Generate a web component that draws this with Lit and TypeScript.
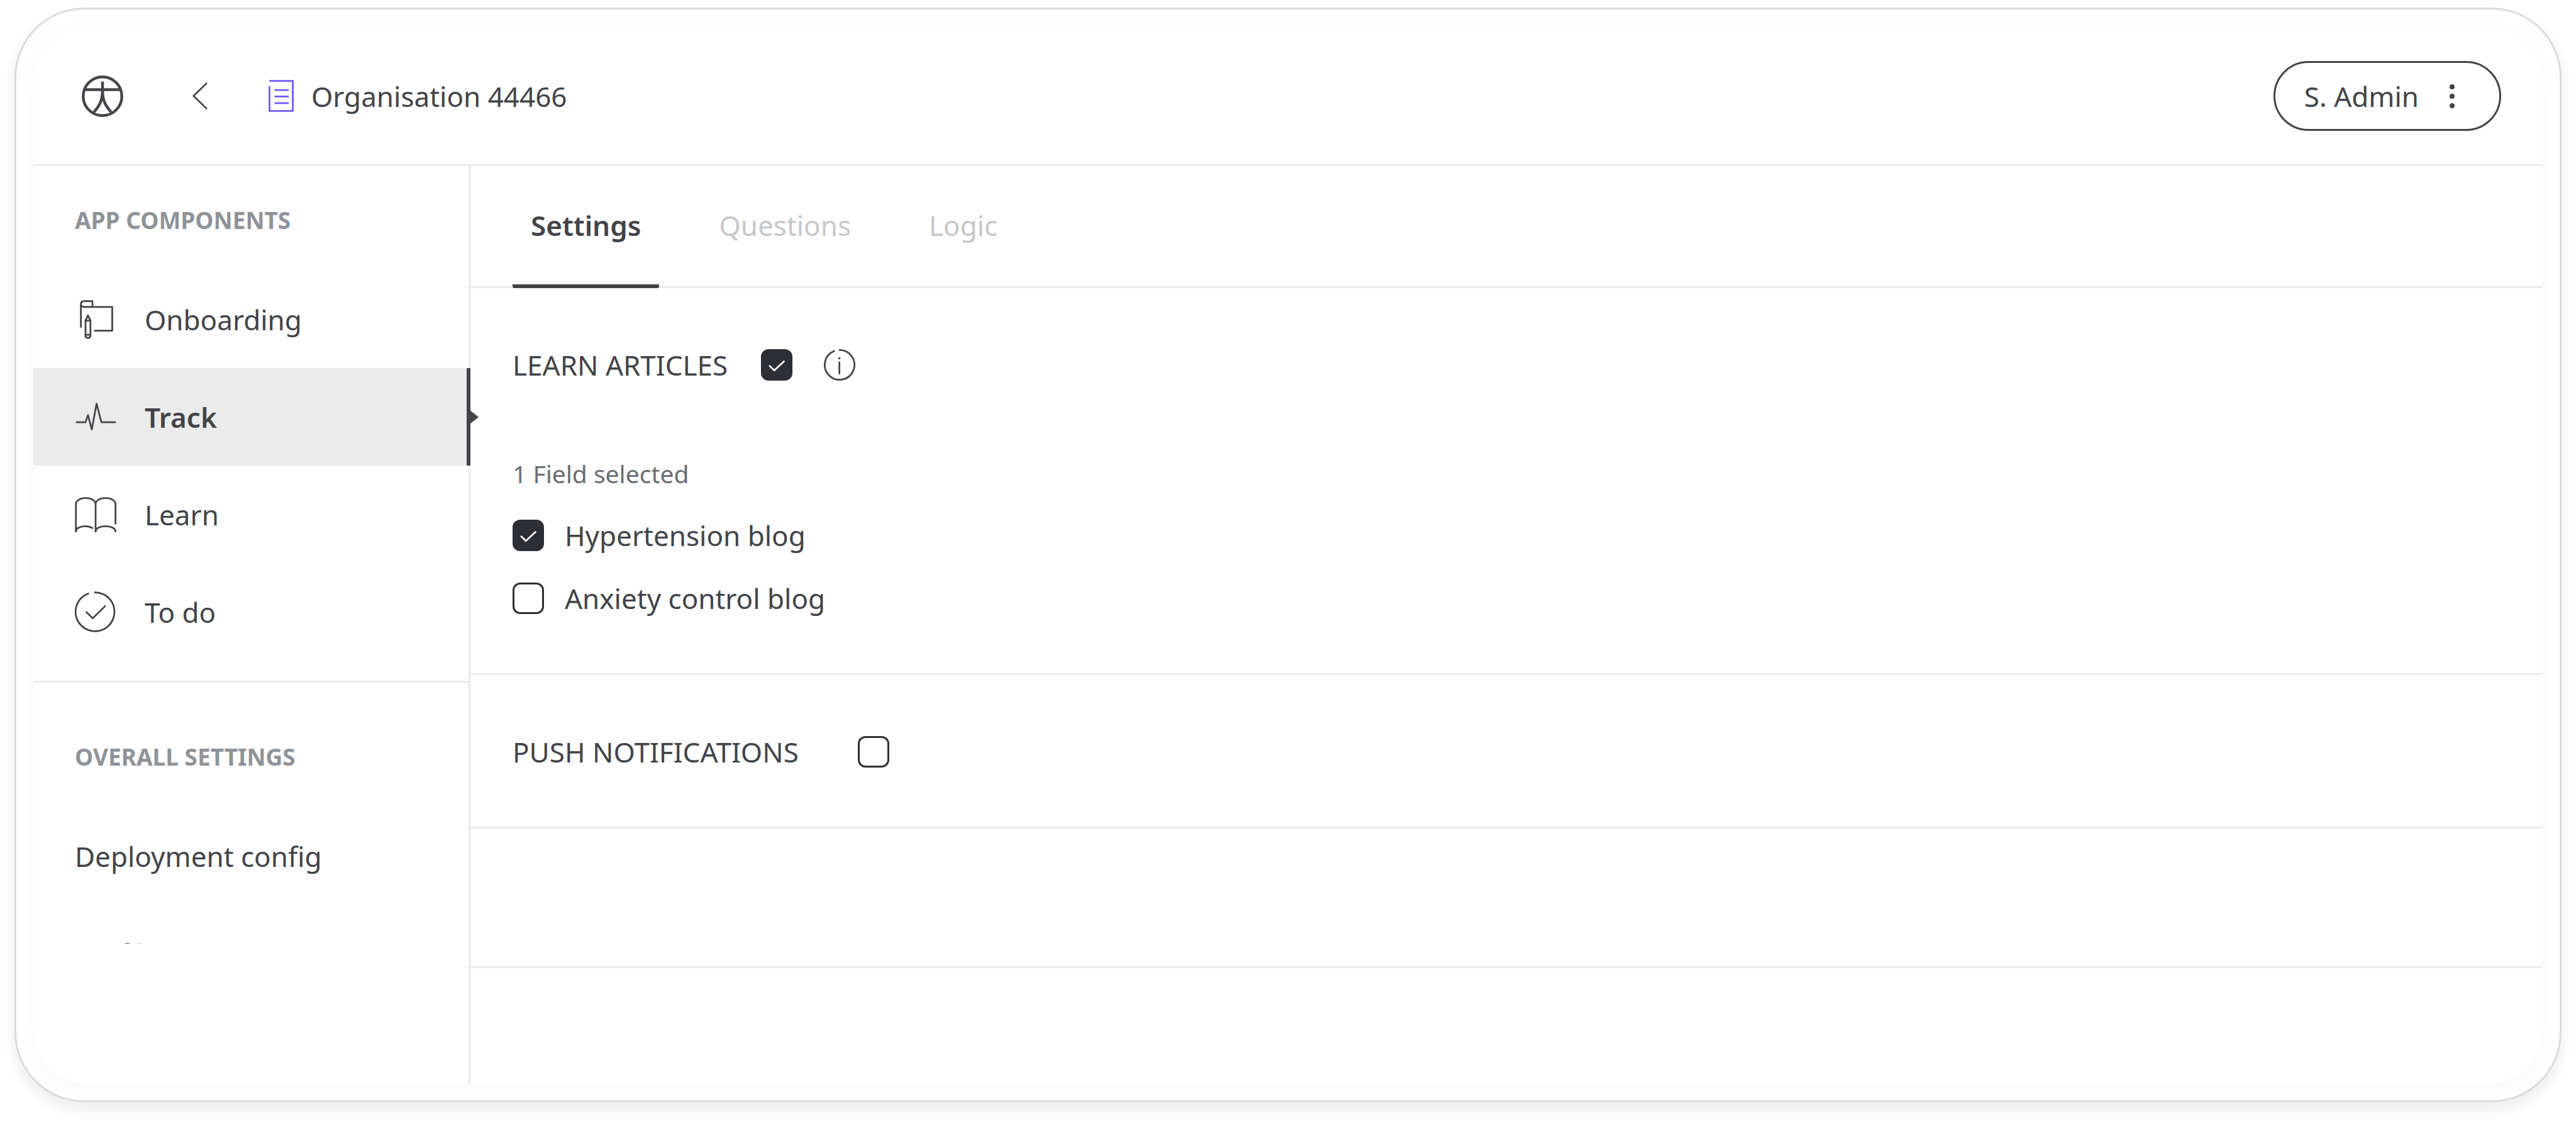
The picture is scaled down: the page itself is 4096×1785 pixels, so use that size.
import { LitElement, html, css, svg, nothing } from "lit";
import { customElement, property, state } from "lit/decorators.js";
import { classMap } from "lit/directives/class-map.js";

const icons = {
  onboarding: svg`
    <path d="M40.7 18.7V5.2H22.5C17 5.2 14 8 14 12.5V65" />
    <path d="M14 12C14 16 17 18.7 21.5 18.7H86.5V73.5H46" />
    <path d="M24.7 50L30.4 38.5L36.1 50V85.5C36.1 88.5 34 90.3 30.4 90.3C26.8 90.3 24.7 88.5 24.7 85.5Z" />
    <path d="M24.7 50.5H36.1M24.7 83H36.1" />`,
  track: svg`<path d="M4 59.8H24.5L30.4 43.5L39.2 76.5L50.2 17L61.4 59.8H93.5" />`,
  learn: svg`
    <path d="M2.5 87V23.5C2.5 15.5 12.5 9.7 25 9.7C38 9.7 48 15.5 48 23.5V87" />
    <path d="M48 23.5C48 15.5 58 9.7 71 9.7C84 9.7 94 15.5 94 23.5V69" />
    <path d="M2.5 87C2.5 80 12 74.8 24 74.8C30.5 74.8 36 76.3 40.5 79" />
    <path d="M48 87C48 80 58 74.8 71 74.8C84 74.8 94 80 94 87" />`,
  todo: svg`
    <path d="M46.5 2.2A45 45 0 1 1 31 5" />
    <path d="M26.8 48L41.4 62.3L70 34" />`,
};

type IconName = keyof typeof icons;

interface NavItem {
  label: string;
  icon?: IconName;
}

@customElement("check-box")
export class CheckBox extends LitElement {
  @property() label = "";
  @property() placement: "before" | "after" = "after";
  @property({ type: Boolean }) checked = false;

  static styles = css`
    :host {
      display: flex;
    }
    .row {
      display: flex;
      align-items: center;
      gap: 33px;
      font-size: 44px;
      line-height: 60px;
      cursor: pointer;
    }
    .row.before {
      flex-direction: row-reverse;
      gap: var(--title-gap, 53px);
    }
    .box {
      display: grid;
      width: 50px;
      height: 50px;
    }
    .input,
    .tick {
      grid-area: 1 / 1;
      width: 50px;
      height: 50px;
      margin: 0;
      box-sizing: border-box;
    }
    .input {
      appearance: none;
      border: 3px solid #2e2f34;
      border-radius: 12px;
      background: #fff;
      cursor: pointer;
    }
    .input:checked {
      background: #2e2f34;
    }
    .tick {
      display: none;
      pointer-events: none;
      fill: none;
      stroke: #fff;
      stroke-width: 4;
      stroke-linecap: round;
      stroke-linejoin: round;
    }
    .input:checked + .tick {
      display: block;
    }
  `;

  render() {
    return html`
      <label class="row ${this.placement}">
        <span class="box">
          <input
            class="input"
            type="checkbox"
            .checked=${this.checked}
            @change=${(e: Event) => (this.checked = (e.target as HTMLInputElement).checked)}
          />
          <svg class="tick" viewBox="0 0 72 72" aria-hidden="true">
            <path d="M20 38.5L30.5 48.5L52.5 28" />
          </svg>
        </span>
        <span>${this.label}</span>
      </label>
    `;
  }
}

@customElement("side-nav")
export class SideNav extends LitElement {
  @state() private current = "Track";

  private components: NavItem[] = [
    { label: "Onboarding", icon: "onboarding" },
    { label: "Track", icon: "track" },
    { label: "Learn", icon: "learn" },
    { label: "To do", icon: "todo" },
  ];

  private overall: NavItem[] = [{ label: "Deployment config" }, { label: "Profile" }];

  static styles = css`
    :host {
      display: block;
      box-sizing: border-box;
      border-right: 3px solid #ebebeb;
    }
    .group {
      padding: 62px 0 32px;
      border-bottom: 3px solid #ebebeb;
    }
    .group.overall {
      padding: 94px 0 0;
      border-bottom: 0;
    }
    .title {
      margin: 0 0 56px;
      padding-left: 66px;
      font-size: 37px;
      line-height: 48px;
      font-weight: 700;
      color: #8f9398;
    }
    .list {
      margin: 0;
      padding: 0;
      list-style: none;
    }
    .overall .list {
      height: 217px;
      overflow: hidden;
    }
    .link {
      position: relative;
      display: flex;
      align-items: center;
      gap: 45px;
      height: 155px;
      padding-left: 66px;
      font-size: 44px;
      line-height: 60px;
      color: inherit;
      text-decoration: none;
    }
    .link.active {
      margin-right: -3px;
      border-right: 6px solid #434448;
      background: #ebebeb;
      font-weight: 600;
    }
    .link.active::after {
      content: "";
      position: absolute;
      left: 100%;
      top: 50%;
      margin: -11px 0 0 5px;
      border: 11px solid transparent;
      border-left: 14px solid #434448;
      border-right: 0;
    }
    .icon {
      width: 66px;
      height: 66px;
      fill: none;
      stroke: currentColor;
      stroke-width: 4;
      stroke-linecap: round;
      stroke-linejoin: round;
    }
  `;

  private renderItem(item: NavItem) {
    const active = item.label === this.current;
    return html`
      <li>
        <a
          class=${classMap({ link: true, active })}
          href="#"
          aria-current=${active ? "page" : nothing}
          @click=${(e: Event) => {
            e.preventDefault();
            this.current = item.label;
          }}
        >
          ${item.icon
            ? html`<svg class="icon" viewBox="0 0 96 96" aria-hidden="true">${icons[item.icon]}</svg>`
            : nothing}
          <span>${item.label}</span>
        </a>
      </li>
    `;
  }

  render() {
    return html`
      <nav>
        <section class="group">
          <h2 class="title">APP COMPONENTS</h2>
          <ul class="list">${this.components.map((i) => this.renderItem(i))}</ul>
        </section>
        <section class="group overall">
          <h2 class="title">OVERALL SETTINGS</h2>
          <ul class="list">${this.overall.map((i) => this.renderItem(i))}</ul>
        </section>
      </nav>
    `;
  }
}

@customElement("app-root")
export class AppRoot extends LitElement {
  @state() private tab = "Settings";

  static styles = css`
    :host {
      display: flex;
      box-sizing: border-box;
      min-height: 100vh;
      padding: 12px 23px 33px;
      background: #fff;
      color: #434448;
      font-family: "Noto Sans", sans-serif;
      font-size: 44px;
      line-height: 60px;
    }
    .frame {
      flex: 1;
      display: flex;
      padding: 27px;
      border: 3px solid #dadbdc;
      border-radius: 111px;
      background: #fefefe;
      box-shadow: 0 11px 22px rgba(0, 0, 0, 0.08);
    }
    .panel {
      flex: 1;
      display: flex;
      flex-direction: column;
      border-radius: 84px;
      background: #fefefe;
      box-shadow: 0 6px 30px rgba(0, 0, 0, 0.025);
    }
    .header {
      display: flex;
      align-items: center;
      padding: 55px 66px 53px 77px;
      border-bottom: 3px solid #ebebeb;
    }
    .logo {
      width: 66px;
      height: 66px;
      margin-right: 110px;
      fill: none;
      stroke: currentColor;
      stroke-width: 6.4;
    }
    .back {
      display: flex;
      margin: 0 97px 0 0;
      padding: 0;
      border: 0;
      background: none;
      color: inherit;
      cursor: pointer;
    }
    .chevron {
      width: 24px;
      height: 43px;
      fill: none;
      stroke: currentColor;
      stroke-width: 4;
      stroke-linecap: round;
      stroke-linejoin: round;
    }
    .doc {
      width: 40px;
      height: 51px;
      margin-right: 28px;
      fill: none;
      stroke: #7459f7;
      stroke-width: 4;
      stroke-linecap: round;
      stroke-linejoin: round;
    }
    .org {
      margin: 0;
      font-size: 44px;
      line-height: 60px;
      font-weight: 400;
    }
    .user {
      display: flex;
      align-items: center;
      gap: 49px;
      height: 111px;
      margin-left: auto;
      padding: 0 71px 0 46px;
      border: 3px solid currentColor;
      border-radius: 56px;
      background: #fff;
      color: inherit;
      font: inherit;
      cursor: pointer;
    }
    .dots {
      width: 8px;
      height: 38px;
      fill: currentColor;
    }
    .body {
      flex: 1;
      display: grid;
      grid-template-columns: 695px 1fr;
    }
    .tabs {
      display: flex;
      gap: 66px;
      height: 191px;
      padding-left: 67px;
      border-bottom: 3px solid #ebebeb;
    }
    .tab {
      height: 194px;
      padding: 0 29px;
      border: 0;
      border-bottom: 6px solid transparent;
      border-radius: 3px;
      background: none;
      color: #c6c7c9;
      font: inherit;
      cursor: pointer;
    }
    .tab.active {
      border-bottom-color: #434448;
      color: inherit;
      font-weight: 600;
    }
    .section {
      padding: 92px 67px 89px;
      border-bottom: 3px solid #ebebeb;
    }
    .section.empty {
      height: 219px;
      padding: 0;
    }
    .heading {
      display: flex;
      align-items: center;
      gap: 50px;
    }
    .wide {
      --title-gap: 94px;
    }
    .help {
      display: flex;
      padding: 0;
      border: 0;
      background: none;
      color: inherit;
      cursor: pointer;
    }
    .info {
      width: 50px;
      height: 50px;
      fill: none;
      stroke: currentColor;
      stroke-width: 4;
      stroke-linecap: round;
    }
    .info .point {
      fill: currentColor;
      stroke: none;
    }
    .count {
      margin: 117px 0 42px;
      font-size: 39px;
      line-height: 52px;
      color: #6a6d72;
    }
    .fields {
      display: grid;
      gap: 40px;
    }
  `;

  render() {
    return html`
      <div class="frame">
        <div class="panel">
          <header class="header">
            <svg class="logo" viewBox="0 0 96 96" aria-hidden="true">
              <circle cx="48" cy="48" r="44.7" />
              <path d="M6 32.8H90M48 14V38" />
              <path d="M48 34C48 54 43 69 28 84.5M48 34C48 54 53 69 68 84.5" />
            </svg>
            <button class="back" aria-label="Back">
              <svg class="chevron" viewBox="0 0 35 62" aria-hidden="true">
                <path d="M32.5 2L2.5 31L32.5 60" />
              </svg>
            </button>
            <svg class="doc" viewBox="0 0 58 74" aria-hidden="true">
              <path d="M3.5 2.2H56V71.5H2.2V16" />
              <path d="M15.5 23.3H45M15.5 38.4H45M15.5 53.5H45" />
            </svg>
            <h1 class="org">Organisation 44466</h1>
            <button class="user">
              <span>S. Admin</span>
              <svg class="dots" viewBox="0 0 8 38" aria-hidden="true">
                <circle cx="4" cy="4" r="4" />
                <circle cx="4" cy="19" r="4" />
                <circle cx="4" cy="34" r="4" />
              </svg>
            </button>
          </header>
          <div class="body">
            <side-nav></side-nav>
            <main>
              <div class="tabs" role="tablist">
                ${["Settings", "Questions", "Logic"].map(
                  (name) => html`
                    <button
                      class=${classMap({ tab: true, active: name === this.tab })}
                      role="tab"
                      aria-selected=${name === this.tab ? "true" : "false"}
                      @click=${() => (this.tab = name)}
                    >${name}</button>
                  `
                )}
              </div>
              <section class="section">
                <div class="heading">
                  <check-box label="LEARN ARTICLES" placement="before" checked></check-box>
                  <button class="help" aria-label="About learn articles">
                    <svg class="info" viewBox="0 0 72 72" aria-hidden="true">
                      <path d="M36 2A34 34 0 1 1 23.5 4.4" />
                      <path d="M35.5 30V56" />
                      <circle class="point" cx="35.5" cy="21" r="2.5" />
                    </svg>
                  </button>
                </div>
                <p class="count">1 Field selected</p>
                <div class="fields">
                  <check-box label="Hypertension blog" checked></check-box>
                  <check-box label="Anxiety control blog"></check-box>
                </div>
              </section>
              <section class="section">
                <check-box class="wide" label="PUSH NOTIFICATIONS" placement="before"></check-box>
              </section>
              <section class="section empty"></section>
            </main>
          </div>
        </div>
      </div>
    `;
  }
}
